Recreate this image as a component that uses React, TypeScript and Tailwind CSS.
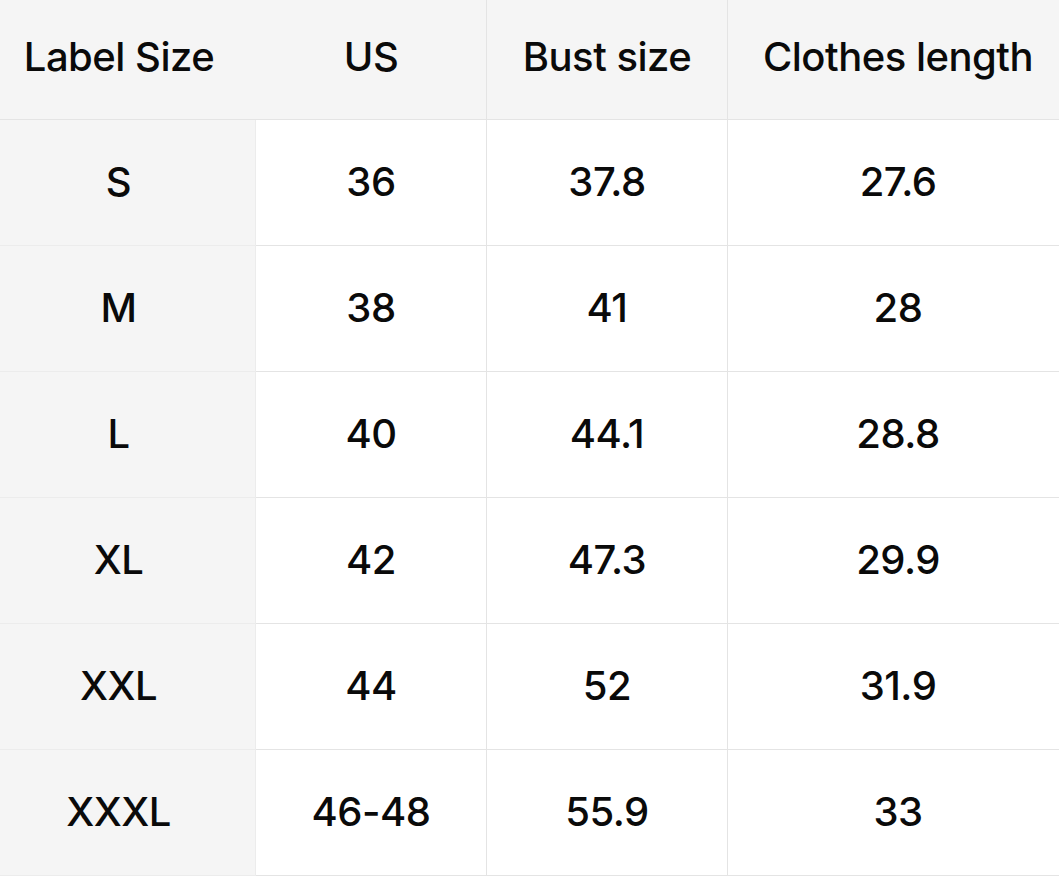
import React from "react";

const rows: [string, string, string, string][] = [
  ["S", "36", "37.8", "27.6"],
  ["M", "38", "41", "28"],
  ["L", "40", "44.1", "28.8"],
  ["XL", "42", "47.3", "29.9"],
  ["XXL", "44", "52", "31.9"],
  ["XXXL", "46-48", "55.9", "33"],
];

export default function App() {
  return (
    <div
      className="w-[1059px] h-[877px] bg-white text-[#0a0a0a] overflow-hidden"
      style={{ fontFamily: "Inter, 'Noto Sans', sans-serif" }}
    >
      <div className="grid grid-cols-[256px_231px_241px_331px] text-[40px] font-medium tracking-[-0.5px]">
        {/* header */}
        <div className="h-[120px] bg-[#f5f5f5] border-b border-[#e4e4e4] flex items-center justify-center pr-[18px] pb-[5px]">
          Label Size
        </div>
        <div className="h-[120px] bg-[#f5f5f5] border-b border-r border-[#e4e4e4] flex items-center justify-center pb-[5px]">
          US
        </div>
        <div className="h-[120px] bg-[#f5f5f5] border-b border-r border-[#e4e4e4] flex items-center justify-center pb-[5px]">
          Bust size
        </div>
        <div className="h-[120px] bg-[#f5f5f5] border-b border-[#e4e4e4] flex items-center justify-center pl-[9px] pb-[5px]">
          Clothes length
        </div>
        {rows.map((r) => (
          <React.Fragment key={r[0]}>
            <div className="h-[126px] bg-[#f5f5f5] border-b border-r border-[#ececec] flex items-center justify-center pr-[18px] pb-[2px]">
              {r[0]}
            </div>
            <div className="h-[126px] border-b border-r border-[#e4e4e4] flex items-center justify-center pb-[2px]">
              {r[1]}
            </div>
            <div className="h-[126px] border-b border-r border-[#e4e4e4] flex items-center justify-center pb-[2px]">
              {r[2]}
            </div>
            <div className="h-[126px] border-b border-[#e4e4e4] flex items-center justify-center pl-[9px] pb-[2px]">
              {r[3]}
            </div>
          </React.Fragment>
        ))}
      </div>
    </div>
  );
}
